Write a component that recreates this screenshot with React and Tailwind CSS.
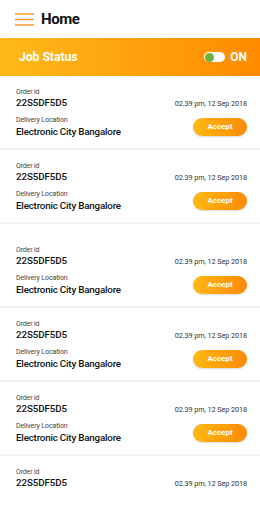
import { useState } from "react";

const orders = [
  { id: 1, pt: "pt-[12px]", full: true },
  { id: 2, pt: "pt-[12px]", full: true },
  { id: 3, pt: "pt-[22px]", full: true },
  { id: 4, pt: "pt-[12px]", full: true },
  { id: 5, pt: "pt-[12px]", full: true },
  { id: 6, pt: "pt-[12px]", full: false },
];

function Hamburger() {
  return (
    <svg width="19" height="13" viewBox="0 0 19 13" fill="none">
      <line x1="0" y1="1" x2="19" y2="1" stroke="#f7941d" strokeWidth="1.4" />
      <line x1="0" y1="6.5" x2="19" y2="6.5" stroke="#f7941d" strokeWidth="1.4" />
      <line x1="0" y1="12" x2="19" y2="12" stroke="#f7941d" strokeWidth="1.4" />
    </svg>
  );
}

function OrderCard({ pt, full }) {
  return (
    <div className={`bg-white pl-[16px] pr-[13px] pb-[10px] ${pt} ${full ? "" : "flex-1"}`}>
      {/* Order row */}
      <div className="flex items-end justify-between">
        <div>
          <p className="text-[7px] leading-[9px] tracking-[-0.15px] text-[#444]">Order id</p>
          <p className="text-[9.8px] leading-[12px] font-medium text-[#111] tracking-[-0.1px]">22S5DF5D5</p>
        </div>
        <p className="text-[7.3px] leading-[10px] tracking-[-0.1px] text-[#333]">02.39 pm, 12 Sep 2018</p>
      </div>

      {/* Location row */}
      {full && (
        <div className="flex items-center justify-between mt-[7px]">
          <div>
            <p className="text-[7px] leading-[9px] tracking-[-0.1px] text-[#444]">Delivery Location</p>
            <p className="text-[9.8px] leading-[13px] font-medium text-[#111] tracking-[-0.2px]">Electronic City Bangalore</p>
          </div>
          <button className="w-[54px] h-[18px] rounded-full bg-gradient-to-r from-[#fdb813] to-[#fd8a06] text-white text-[8px] font-bold shadow-[0_1px_2px_rgba(0,0,0,0.15)]">
            Accept
          </button>
        </div>
      )}
    </div>
  );
}

export default function App() {
  const [on] = useState(true);

  return (
    <div className="w-[260px] h-[512px] overflow-hidden bg-[#f3f3f3] flex flex-col font-['Roboto',sans-serif]">
      {/* Header */}
      <div className="h-[38px] shrink-0 bg-white flex items-center pl-[15px]">
        <Hamburger />
        <h1 className="ml-[7px] text-[15px] font-bold text-[#111] leading-none tracking-[-0.4px]">Home</h1>
      </div>

      {/* Job status bar */}
      <div className="h-[38px] shrink-0 bg-gradient-to-r from-[#fdba18] to-[#ff8a00] flex items-center justify-between pl-[19px] pr-[13px]">
        <span className="text-white text-[12.3px] font-bold tracking-[-0.1px]">Job Status</span>
        <div className="flex items-center">
          <div className="w-[21px] h-[10px] rounded-full bg-white flex items-center pl-[1px]">
            {on && <div className="w-[9px] h-[9px] rounded-full bg-[#6cb33e]" />}
          </div>
          <span className="ml-[5px] text-white text-[12px] font-bold">ON</span>
        </div>
      </div>

      {/* Orders */}
      <div className="flex-1 flex flex-col gap-[2px]">
        {orders.map((o) => (
          <OrderCard key={o.id} pt={o.pt} full={o.full} />
        ))}
      </div>
    </div>
  );
}
